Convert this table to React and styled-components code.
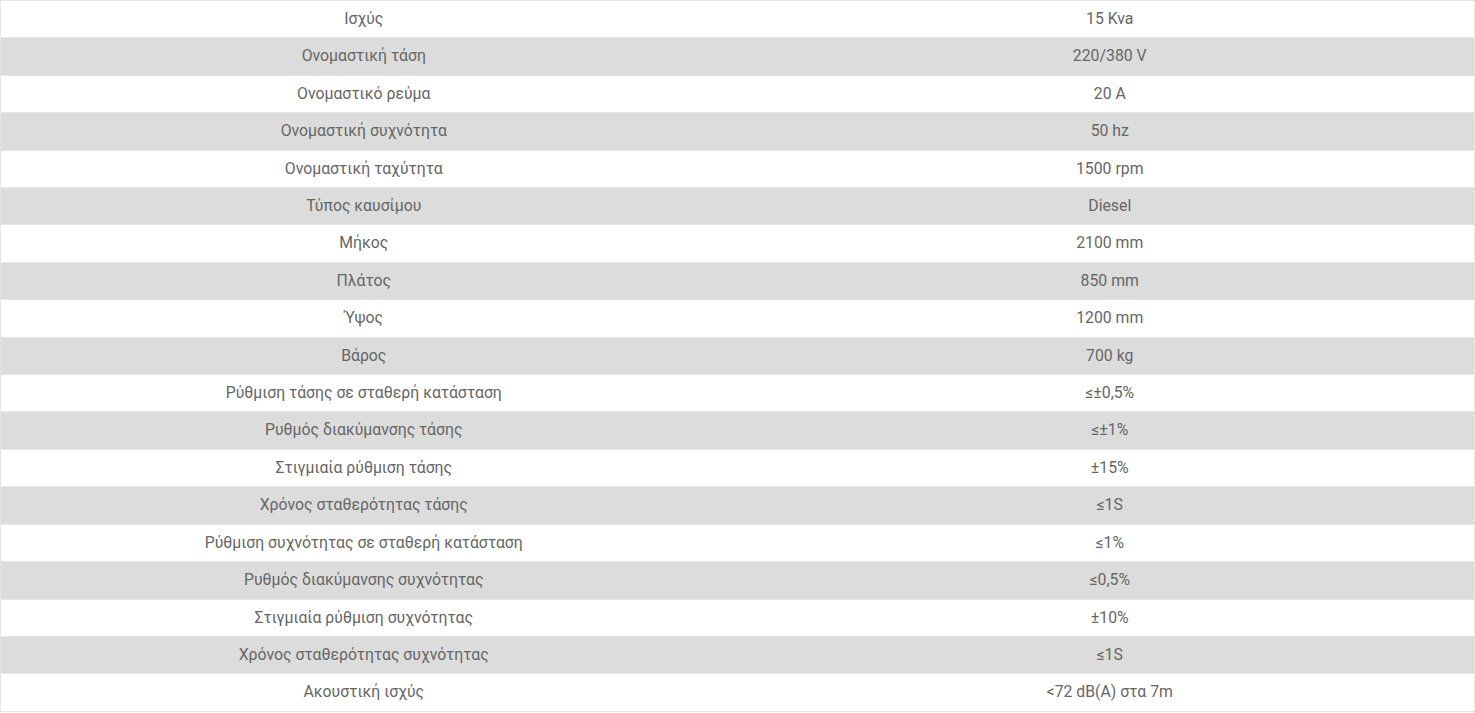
import styled, { createGlobalStyle } from "styled-components";

const specs = [
  ["Ισχύς", "15 Kva"],
  ["Ονομαστική τάση", "220/380 V"],
  ["Ονομαστικό ρεύμα", "20 A"],
  ["Ονομαστική συχνότητα", "50 hz"],
  ["Ονομαστική ταχύτητα", "1500 rpm"],
  ["Τύπος καυσίμου", "Diesel"],
  ["Μήκος", "2100 mm"],
  ["Πλάτος", "850 mm"],
  ["Ύψος", "1200 mm"],
  ["Βάρος", "700 kg"],
  ["Ρύθμιση τάσης σε σταθερή κατάσταση", "≤±0,5%"],
  ["Ρυθμός διακύμανσης τάσης", "≤±1%"],
  ["Στιγμιαία ρύθμιση τάσης", "±15%"],
  ["Χρόνος σταθερότητας τάσης", "≤1S"],
  ["Ρύθμιση συχνότητας σε σταθερή κατάσταση", "≤1%"],
  ["Ρυθμός διακύμανσης συχνότητας", "≤0,5%"],
  ["Στιγμιαία ρύθμιση συχνότητας", "±10%"],
  ["Χρόνος σταθερότητας συχνότητας", "≤1S"],
  ["Ακουστική ισχύς", "<72 dB(A) στα 7m"],
];

const GlobalStyle = createGlobalStyle`
  body {
    margin: 0;
    background: #fff;
    font-family: Roboto, "Noto Sans", sans-serif;
  }
`;

const SpecTable = styled.table`
  width: 100%;
  border-collapse: collapse;
  border: 1px solid #e6e6e6;
  table-layout: fixed;
`;

const Row = styled.tr`
  background: ${(p) => (p.$shaded ? "#dcdcdc" : "#fff")};
  border-bottom: 1px solid #e6e6e6;
`;

const Cell = styled.td`
  text-align: center;
  color: #666;
  font-size: 15.8px;
  line-height: 24.4px;
  padding: ${(p) => (p.$label ? "6px 19px 6px 0" : "6px 0")};
`;

const App = () => {
  return (
    <>
      <GlobalStyle />
      <SpecTable>
        <colgroup>
          <col style={{ width: 745 }} />
          <col />
        </colgroup>
        <tbody>
          {specs.map(([label, value], i) => (
            <Row key={label} $shaded={i % 2 === 1}>
              <Cell $label>{label}</Cell>
              <Cell>{value}</Cell>
            </Row>
          ))}
        </tbody>
      </SpecTable>
    </>
  );
};

export default App;
